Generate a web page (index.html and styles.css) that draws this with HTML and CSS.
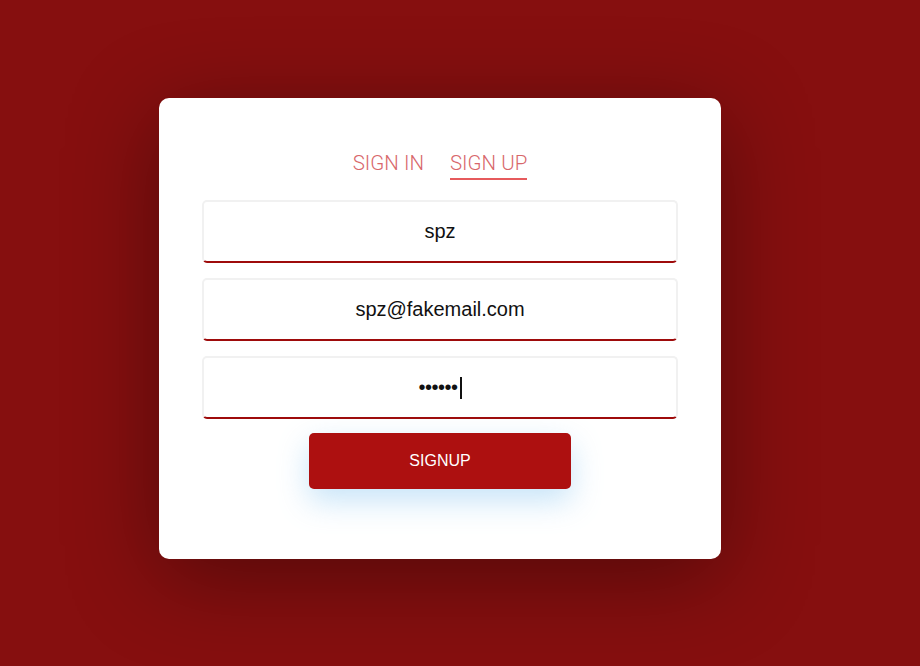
FILE: index.html
```html
<!DOCTYPE html>
<html lang="en">
<head>
<meta charset="utf-8">
<title>Sign up</title>
<link rel="stylesheet" href="styles.css">
</head>
<body>
<div class="stage">
  <div class="card">
    <nav class="tabs">
      <span class="tab">SIGN IN</span>
      <span class="tab active">SIGN UP</span>
    </nav>
    <form class="form">
      <div class="field"><span class="value">spz</span></div>
      <div class="field"><span class="value">spz@fakemail.com</span></div>
      <div class="field"><span class="value dots">••••••</span><span class="caret"></span></div>
      <button type="button" class="btn">SIGNUP</button>
    </form>
  </div>
</div>
</body>
</html>
```
FILE: styles.css
```css
html, body {
  margin: 0;
  height: 100%;
}
body {
  background: #860f0f;
  font-family: "Liberation Sans", Arial, sans-serif;
  overflow: hidden;
}
.stage {
  padding: 98px 0 0 159px;
}
.card {
  width: 562px;
  height: 461px;
  box-sizing: border-box;
  padding: 54px 43px 0;
  background: #fff;
  border-radius: 10px;
  box-shadow: 0 18px 90px rgba(0, 0, 0, 0.38);
}
.tabs {
  display: flex;
  justify-content: center;
  gap: 26px;
}
.tab {
  font-family: "Roboto", sans-serif;
  font-weight: 300;
  font-size: 20.5px;
  line-height: 22px;
  color: #d8676b;
  padding-bottom: 4px;
  border-bottom: 2px solid transparent;
}
.tab.active {
  border-bottom-color: #e65a5c;
}
.form {
  margin-top: 20px;
  display: flex;
  flex-direction: column;
  align-items: center;
}
.field {
  width: 476px;
  height: 63px;
  box-sizing: border-box;
  border: 2px solid #f1f1f1;
  border-bottom-color: #9e0b0b;
  border-radius: 5px;
  display: flex;
  align-items: center;
  justify-content: center;
  margin-bottom: 15px;
  font-size: 20px;
  color: #111;
}
.field:nth-child(3) {
  margin-bottom: 14px;
}
.dots {
  font-size: 20px;
  letter-spacing: -0.5px;
}
.caret {
  width: 2px;
  height: 22px;
  background: #111;
  margin-left: 2px;
}
.btn {
  width: 262px;
  height: 56px;
  border: 0;
  border-radius: 5px;
  background: #ad1010;
  color: #fff;
  font-family: "Liberation Sans", Arial, sans-serif;
  font-size: 16px;
  box-shadow: 0 12px 30px rgba(130, 195, 240, 0.45);
}
```
